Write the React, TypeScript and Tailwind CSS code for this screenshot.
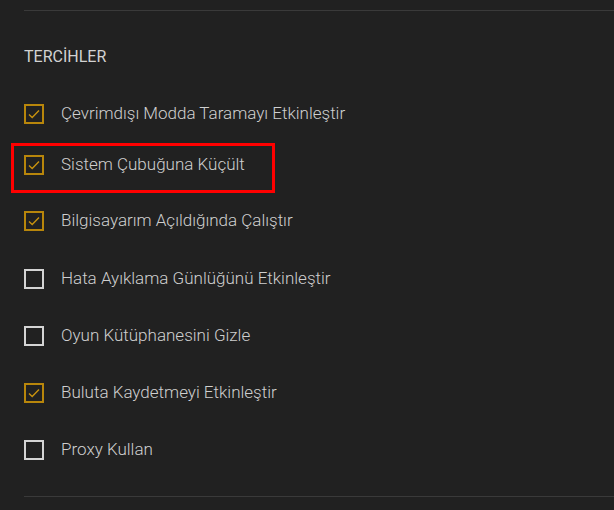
import React, { useState } from 'react';

const items = [
  { label: 'Çevrimdışı Modda Taramayı Etkinleştir', checked: true, mt: 'mt-[37px]' },
  { label: 'Sistem Çubuğuna Küçült', checked: true, mt: 'mt-[31px]', highlight: true },
  { label: 'Bilgisayarım Açıldığında Çalıştır', checked: true, mt: 'mt-[36px]' },
  { label: 'Hata Ayıklama Günlüğünü Etkinleştir', checked: false, mt: 'mt-[38px]' },
  { label: 'Oyun Kütüphanesini Gizle', checked: false, mt: 'mt-[37px]' },
  { label: 'Buluta Kaydetmeyi Etkinleştir', checked: true, mt: 'mt-[37px]' },
  { label: 'Proxy Kullan', checked: false, mt: 'mt-[37px]' },
];

const Check = ({ checked }: { checked: boolean }) => (
  <span
    className={`w-5 h-5 shrink-0 border-2 flex items-center justify-center ${
      checked ? 'border-[#b8860b]' : 'border-[#d4d4d4]'
    }`}
  >
    {checked && (
      <svg width="12" height="10" viewBox="0 0 12 10" fill="none">
        <path d="M1 5.5 L4.2 8.5 L11 1.5" stroke="#c8920e" strokeWidth="1.4" />
      </svg>
    )}
  </span>
);

export default function App() {
  const [state, setState] = useState(items.map(i => i.checked));

  return (
    <div className="w-[614px] h-[510px] bg-[#212121] overflow-hidden font-['Roboto',sans-serif]">
      <div className="pl-6 pt-[10px]">
        <div className="h-px bg-[#3a3a3a]"></div>
        <h3 className="mt-[36px] text-[16px] leading-5 text-[#d2d2d2]">TERCİHLER</h3>
        <div className="flex flex-col">
          {items.map((item, i) => (
            <label
              key={item.label}
              className={`relative flex items-center gap-[17px] h-5 cursor-pointer ${item.mt}`}
              onClick={() => setState(s => s.map((v, j) => (j === i ? !v : v)))}
            >
              {item.highlight && (
                <span className="absolute -left-[13px] -top-[12px] w-[264px] h-[50px] border-[3px] border-[#ff0000] pointer-events-none"></span>
              )}
              <Check checked={state[i]} />
              <span className="text-[17px] font-light text-[#cfcfcf] whitespace-nowrap">{item.label}</span>
            </label>
          ))}
        </div>
        <div className="h-px bg-[#3a3a3a] mt-[36px]"></div>
      </div>
    </div>
  );
}
